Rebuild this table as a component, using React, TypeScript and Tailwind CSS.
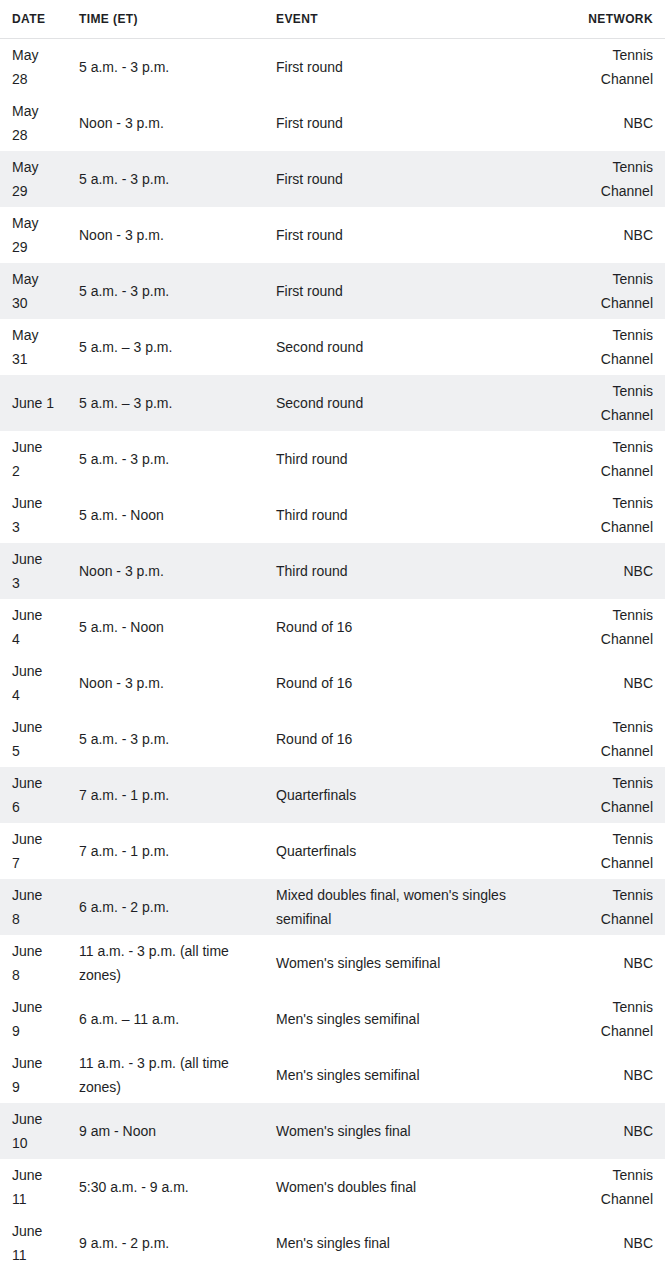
import React from 'react';

type Row = {
  date: string[];
  time: string[];
  event: string[];
  network: 'TC' | 'NBC';
  shaded?: boolean;
};

const rows: Row[] = [
  { date: ['May', '28'], time: ['5 a.m. - 3 p.m.'], event: ['First round'], network: 'TC' },
  { date: ['May', '28'], time: ['Noon - 3 p.m.'], event: ['First round'], network: 'NBC' },
  { date: ['May', '29'], time: ['5 a.m. - 3 p.m.'], event: ['First round'], network: 'TC', shaded: true },
  { date: ['May', '29'], time: ['Noon - 3 p.m.'], event: ['First round'], network: 'NBC' },
  { date: ['May', '30'], time: ['5 a.m. - 3 p.m.'], event: ['First round'], network: 'TC', shaded: true },
  { date: ['May', '31'], time: ['5 a.m. – 3 p.m.'], event: ['Second round'], network: 'TC' },
  { date: ['June 1'], time: ['5 a.m. – 3 p.m.'], event: ['Second round'], network: 'TC', shaded: true },
  { date: ['June', '2'], time: ['5 a.m. - 3 p.m.'], event: ['Third round'], network: 'TC' },
  { date: ['June', '3'], time: ['5 a.m. - Noon'], event: ['Third round'], network: 'TC' },
  { date: ['June', '3'], time: ['Noon - 3 p.m.'], event: ['Third round'], network: 'NBC', shaded: true },
  { date: ['June', '4'], time: ['5 a.m. - Noon'], event: ['Round of 16'], network: 'TC' },
  { date: ['June', '4'], time: ['Noon - 3 p.m.'], event: ['Round of 16'], network: 'NBC' },
  { date: ['June', '5'], time: ['5 a.m. - 3 p.m.'], event: ['Round of 16'], network: 'TC' },
  { date: ['June', '6'], time: ['7 a.m. - 1 p.m.'], event: ['Quarterfinals'], network: 'TC', shaded: true },
  { date: ['June', '7'], time: ['7 a.m. - 1 p.m.'], event: ['Quarterfinals'], network: 'TC' },
  {
    date: ['June', '8'],
    time: ['6 a.m. - 2 p.m.'],
    event: ["Mixed doubles final, women's singles", 'semifinal'],
    network: 'TC',
    shaded: true,
  },
  { date: ['June', '8'], time: ['11 a.m. - 3 p.m. (all time', 'zones)'], event: ["Women's singles semifinal"], network: 'NBC' },
  { date: ['June', '9'], time: ['6 a.m. – 11 a.m.'], event: ["Men's singles semifinal"], network: 'TC' },
  { date: ['June', '9'], time: ['11 a.m. - 3 p.m. (all time', 'zones)'], event: ["Men's singles semifinal"], network: 'NBC' },
  { date: ['June', '10'], time: ['9 am - Noon'], event: ["Women's singles final"], network: 'NBC', shaded: true },
  { date: ['June', '11'], time: ['5:30 a.m. - 9 a.m.'], event: ["Women's doubles final"], network: 'TC' },
  { date: ['June', '11'], time: ['9 a.m. - 2 p.m.'], event: ["Men's singles final"], network: 'NBC' },
];

function Lines({ lines }: { lines: string[] }) {
  return (
    <>
      {lines.map((line, i) => (
        <span key={i} className="block whitespace-nowrap">
          {line}
        </span>
      ))}
    </>
  );
}

export default function App() {
  return (
    <div
      className="w-[672px] bg-white text-[#1e1f26]"
      style={{ fontFamily: '"Liberation Sans", Arial, sans-serif' }}
    >
      <table className="w-[665px] table-fixed border-collapse">
        <colgroup>
          <col className="w-[67px]" />
          <col className="w-[197px]" />
          <col className="w-[260px]" />
          <col className="w-[141px]" />
        </colgroup>
        <thead>
          <tr className="h-[38px] border-b border-[#e1e2e4]">
            <th className="pl-3 text-left align-middle text-[12px] font-bold uppercase tracking-[0.4px]">Date</th>
            <th className="pl-3 text-left align-middle text-[12px] font-bold uppercase tracking-[0.4px]">Time (ET)</th>
            <th className="pl-3 text-left align-middle text-[12px] font-bold uppercase tracking-[0.4px]">Event</th>
            <th className="pr-3 text-right align-middle text-[12px] font-bold uppercase tracking-[0.4px]">Network</th>
          </tr>
        </thead>
        <tbody>
          {rows.map((row, i) => (
            <tr key={i} className={row.shaded ? 'h-14 bg-[#eff0f2]' : 'h-14'}>
              <td className="py-1 pl-3 align-middle text-[14px] leading-6">
                <Lines lines={row.date} />
              </td>
              <td className="py-1 pl-3 align-middle text-[14px] leading-6">
                <Lines lines={row.time} />
              </td>
              <td className="py-1 pl-3 align-middle text-[14px] leading-6">
                <Lines lines={row.event} />
              </td>
              <td className="py-1 pr-3 text-right align-middle text-[14px] leading-6">
                <Lines lines={row.network === 'TC' ? ['Tennis', 'Channel'] : ['NBC']} />
              </td>
            </tr>
          ))}
        </tbody>
      </table>
    </div>
  );
}
